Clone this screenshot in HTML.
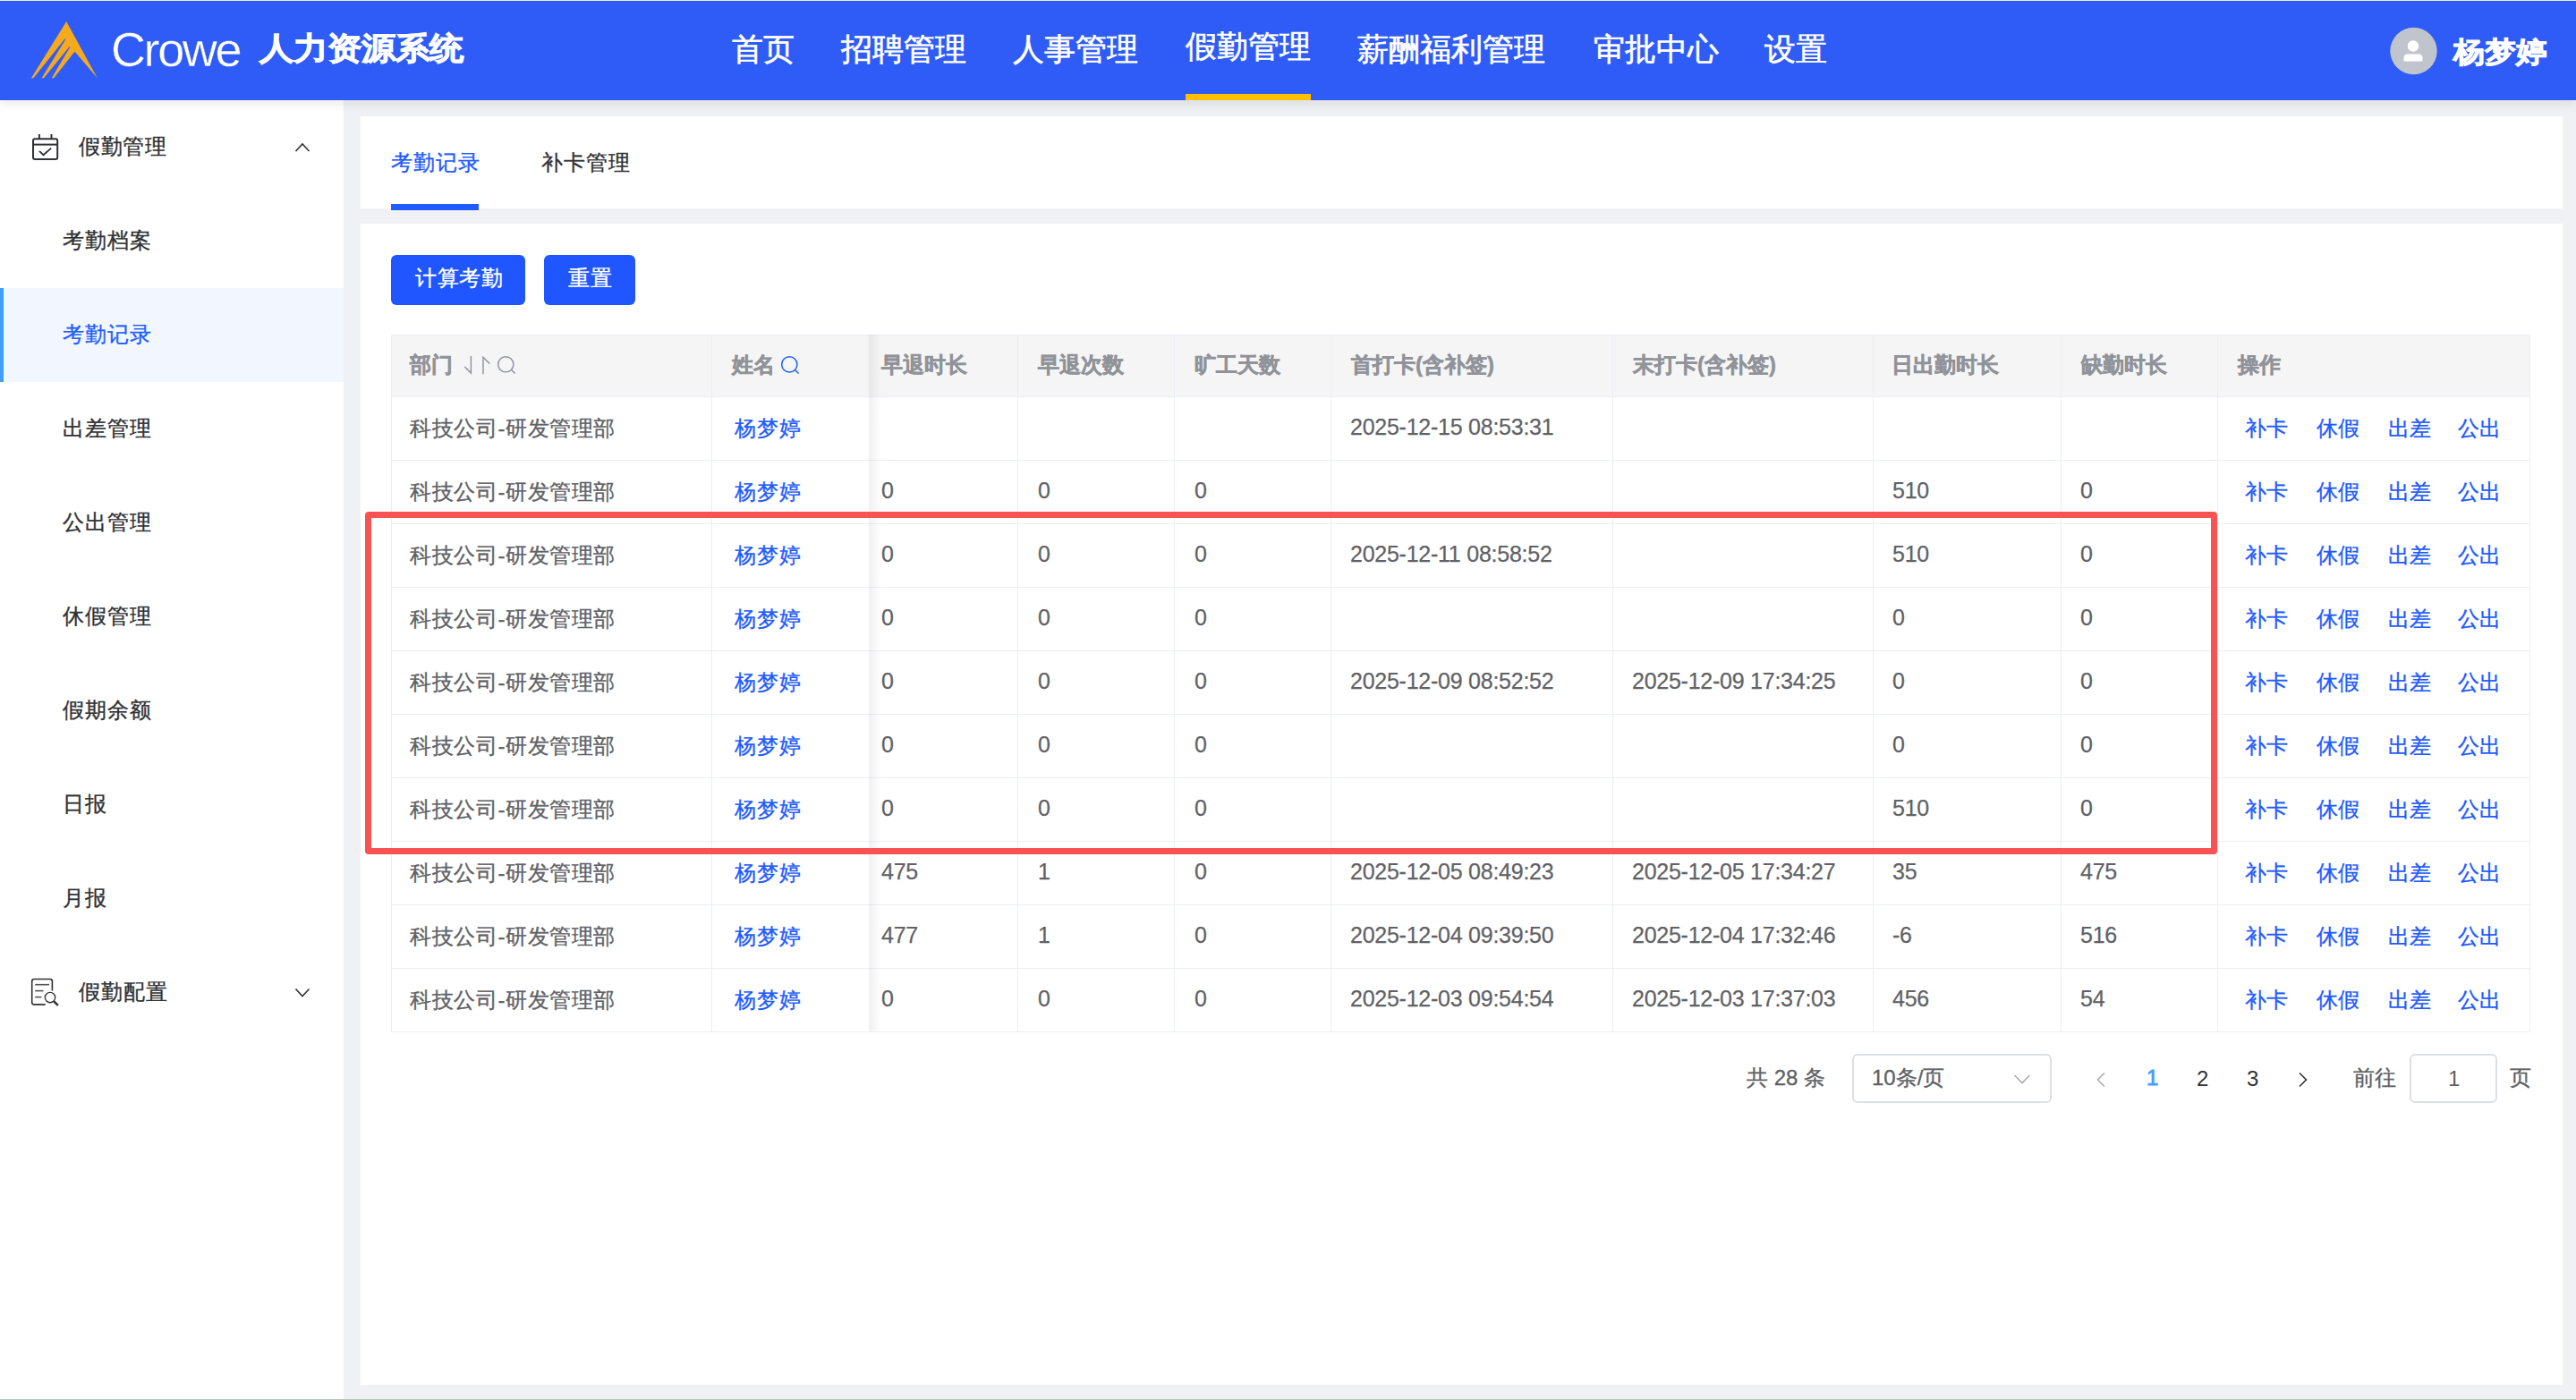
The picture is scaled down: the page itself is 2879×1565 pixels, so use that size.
<!DOCTYPE html><html><head><meta charset="utf-8"><style>
*{margin:0;padding:0;box-sizing:border-box}
html,body{width:2879px;height:1565px;overflow:hidden;background:#f0f1f4;font-family:"Liberation Sans",sans-serif;position:relative}
.a{position:absolute;white-space:nowrap;line-height:1}
#hdr{position:absolute;left:0;top:0;width:2879px;height:112px;background:#2f5cf6;border-top:1px solid #ebebdf;box-shadow:0 3px 12px rgba(0,0,0,.10);z-index:5}
.nav{color:#fff;font-size:35px;-webkit-text-stroke:.6px #fff}
#side{position:absolute;left:0;top:112px;width:384px;height:1453px;background:#fff}
.sm{font-size:24px;color:#303133;letter-spacing:1px;-webkit-text-stroke-width:.35px}
.cj{-webkit-text-stroke-width:.35px}
.card{position:absolute;background:#fff}
.th{font-size:24px;font-weight:bold;color:#909399;-webkit-text-stroke:.5px #909399}
.td{font-size:24px;color:#606266}
.num{font-size:25px;margin-top:-2px;letter-spacing:-.25px;-webkit-text-stroke-width:.25px}
.lk{font-size:24px;color:#1f5bff}
.hl{position:absolute;height:1px;background:#ebeef5}
.vl{position:absolute;width:1px;background:#ebeef5}
</style></head><body>
<div id="hdr">
<svg class="a" style="left:0;top:-1px" width="120" height="112" viewBox="0 0 120 112">
<path fill="#f5a91f" d="M74.2,24 L108.8,87.3 L84.3,58.6 Q83.6,57.8 82.8,58.6 L60.2,87.3 L57.8,87.3 L78.3,52.6 Q78.4,51.6 77.5,52.2 L49,87.3 L46.6,87.3 L73.3,44 Q73.4,43 72.5,43.6 L37.4,87.3 L35,87.3 Z"/></svg>
<div class="a" style="left:124px;top:27px;font-size:54px;color:#fff;letter-spacing:-2.4px;-webkit-text-stroke:.35px #2f5cf6">Crowe</div>
<div class="a" style="left:290px;top:36px;font-size:38px;font-weight:bold;color:#fff;-webkit-text-stroke:1px #fff;transform:scaleY(.91);transform-origin:0 0">人力资源系统</div>
<div class="a nav" style="left:818px;top:36px">首页</div>
<div class="a nav" style="left:940px;top:36px">招聘管理</div>
<div class="a nav" style="left:1132px;top:36px">人事管理</div>
<div class="a nav" style="left:1325px;top:33px">假勤管理</div>
<div class="a nav" style="left:1517px;top:36px">薪酬福利管理</div>
<div class="a nav" style="left:1781px;top:36px">审批中心</div>
<div class="a nav" style="left:1972px;top:36px">设置</div>
<div class="a" style="left:1325px;top:104px;width:140px;height:7px;background:#ffc000"></div>
<svg class="a" style="left:2670px;top:29px" width="54" height="54" viewBox="0 0 54 54">
<circle cx="27.5" cy="27" r="26.2" fill="#c0c5cd"/><circle cx="27" cy="21.5" r="6.2" fill="#fff"/>
<path fill="#fff" d="M16.5,38.5 L16.5,35 Q16.5,30.5 21,30.5 L33,30.5 Q37.5,30.5 37.5,35 L37.5,38.5 Z"/></svg>
<div class="a" style="left:2742px;top:40px;font-size:35px;font-weight:bold;color:#fff;-webkit-text-stroke:1px #fff;transform:scaleY(.92);transform-origin:0 0">杨梦婷</div>
</div>
<div id="side"></div>
<svg class="a" style="left:28px;top:140px" width="50" height="50" viewBox="28 140 50 50" fill="none" stroke="#303133" stroke-width="2">
<rect x="37" y="155.3" width="27.2" height="22.6" rx="2"/><line x1="37" y1="161.6" x2="64.2" y2="161.6"/>
<line x1="43.9" y1="150" x2="43.9" y2="155"/><line x1="57.5" y1="150" x2="57.5" y2="155"/>
<polyline points="44,168.8 48.5,173.2 57.2,165.6" stroke-width="1.8"/></svg>
<div class="a sm" style="left:88px;top:152px;letter-spacing:.5px">假勤管理</div>
<svg class="a" style="left:328px;top:156px" width="20" height="16" viewBox="0 0 20 16" fill="none" stroke="#303133" stroke-width="1.6"><polyline points="2.5,13 10,5 17.5,13"/></svg>
<div class="a sm" style="left:70px;top:257px">考勤档案</div>
<div class="a" style="left:0;top:322px;width:384px;height:105px;background:#f2f7ff"></div>
<div class="a" style="left:0;top:322px;width:4px;height:105px;background:#409eff"></div>
<div class="a sm" style="left:70px;top:362px;color:#1f5eff">考勤记录</div>
<div class="a sm" style="left:70px;top:467px">出差管理</div>
<div class="a sm" style="left:70px;top:572px">公出管理</div>
<div class="a sm" style="left:70px;top:677px">休假管理</div>
<div class="a sm" style="left:70px;top:782px">假期余额</div>
<div class="a sm" style="left:70px;top:887px">日报</div>
<div class="a sm" style="left:70px;top:992px">月报</div>
<svg class="a" style="left:28px;top:1085px" width="50" height="50" viewBox="28 1085 50 50" fill="none" stroke="#303133" stroke-width="1.6">
<path d="M58.4,1107.5 L58.4,1097 Q58.4,1094.5 55.9,1094.5 L38.2,1094.5 Q35.7,1094.5 35.7,1097 L35.7,1120.4 Q35.7,1122.9 38.2,1122.9 L50.7,1122.9"/>
<g stroke="#555"><line x1="39.2" y1="1100.7" x2="55" y2="1100.7"/><line x1="39.2" y1="1107.6" x2="48.5" y2="1107.6"/><line x1="39.2" y1="1114.6" x2="46.5" y2="1114.6"/></g>
<circle cx="56" cy="1115" r="5.7" stroke-width="1.35"/><line x1="60.3" y1="1119.3" x2="64.8" y2="1123.8" stroke-width="2.6"/></svg>
<div class="a sm" style="left:88px;top:1097px">假勤配置</div>
<svg class="a" style="left:328px;top:1102px" width="20" height="16" viewBox="0 0 20 16" fill="none" stroke="#303133" stroke-width="1.6"><polyline points="2.5,3.5 10,11.5 17.5,3.5"/></svg>
<div class="card" style="left:403px;top:130px;width:2461px;height:103px"></div>
<div class="a" style="left:437px;top:170px;font-size:24px;color:#1f5bff;letter-spacing:1px;-webkit-text-stroke-width:.35px">考勤记录</div>
<div class="a" style="left:605px;top:170px;font-size:24px;color:#303133;letter-spacing:1px;-webkit-text-stroke-width:.35px">补卡管理</div>
<div class="a" style="left:437px;top:228px;width:98px;height:7px;background:#1f5bff"></div>
<div class="card" style="left:403px;top:250px;width:2461px;height:1298px"></div>
<div class="a" style="left:437px;top:285px;width:150px;height:56px;background:#1f56ff;border-radius:6px"></div>
<div class="a" style="left:464px;top:299px;font-size:24px;color:#fff;letter-spacing:.7px;-webkit-text-stroke-width:.35px">计算考勤</div>
<div class="a" style="left:608px;top:285px;width:102px;height:56px;background:#1f56ff;border-radius:6px"></div>
<div class="a" style="left:635px;top:299px;font-size:24px;color:#fff;letter-spacing:1px;-webkit-text-stroke-width:.35px">重置</div>
<div class="a" style="left:437px;top:374px;width:2391px;height:69px;background:#f5f5f5"></div>
<div class="hl" style="left:437px;top:374px;width:2391px"></div>
<div class="hl" style="left:437px;top:443px;width:2391px"></div>
<div class="hl" style="left:437px;top:514px;width:2391px"></div>
<div class="hl" style="left:437px;top:585px;width:2391px"></div>
<div class="hl" style="left:437px;top:656px;width:2391px"></div>
<div class="hl" style="left:437px;top:727px;width:2391px"></div>
<div class="hl" style="left:437px;top:798px;width:2391px"></div>
<div class="hl" style="left:437px;top:869px;width:2391px"></div>
<div class="hl" style="left:437px;top:940px;width:2391px"></div>
<div class="hl" style="left:437px;top:1011px;width:2391px"></div>
<div class="hl" style="left:437px;top:1082px;width:2391px"></div>
<div class="hl" style="left:437px;top:1153px;width:2391px"></div>
<div class="vl" style="left:437px;top:374px;height:779px"></div>
<div class="vl" style="left:795px;top:374px;height:779px"></div>
<div class="vl" style="left:1137px;top:374px;height:779px"></div>
<div class="vl" style="left:1312px;top:374px;height:779px"></div>
<div class="vl" style="left:1487px;top:374px;height:779px"></div>
<div class="vl" style="left:1802px;top:374px;height:779px"></div>
<div class="vl" style="left:2093px;top:374px;height:779px"></div>
<div class="vl" style="left:2303px;top:374px;height:779px"></div>
<div class="vl" style="left:2478px;top:374px;height:779px"></div>
<div class="vl" style="left:2827px;top:374px;height:779px"></div>
<div class="a" style="left:971px;top:374px;width:14px;height:779px;background:linear-gradient(90deg,rgba(0,0,0,.06),rgba(0,0,0,0))"></div>
<div class="a th" style="left:458px;top:396px">部门</div>
<div class="a th" style="left:818px;top:396px">姓名</div>
<div class="a th" style="left:985px;top:396px">早退时长</div>
<div class="a th" style="left:1160px;top:396px">早退次数</div>
<div class="a th" style="left:1335px;top:396px">旷工天数</div>
<div class="a th" style="left:1510px;top:396px">首打卡(含补签)</div>
<div class="a th" style="left:1825px;top:396px">末打卡(含补签)</div>
<div class="a th" style="left:2114px;top:396px">日出勤时长</div>
<div class="a th" style="left:2326px;top:396px">缺勤时长</div>
<div class="a th" style="left:2501px;top:396px">操作</div>
<svg class="a" style="left:510px;top:385px" width="80" height="45" viewBox="510 385 80 45" fill="none" stroke="#8c9099" stroke-width="1.4">
<polyline points="526.4,398 526.4,417 519.3,409.9"/><polyline points="540,418.3 540,399.3 547.3,406.5"/>
<circle cx="565.3" cy="407.3" r="8.6"/><line x1="571.6" y1="413.6" x2="575.6" y2="417.6"/></svg>
<svg class="a" style="left:860px;top:385px" width="45" height="45" viewBox="860 385 45 45" fill="none" stroke="#1f5bff" stroke-width="1.5">
<circle cx="882.3" cy="407.4" r="8.6"/><line x1="888.6" y1="413.7" x2="892.5" y2="417.5"/></svg>
<div class="a td cj" style="left:458px;top:467px;letter-spacing:.6px">科技公司-研发管理部</div>
<div class="a lk cj" style="left:821px;top:467px;letter-spacing:1px">杨梦婷</div>
<div class="a td num" style="left:1509px;top:467px">2025-12-15 08:53:31</div>
<div class="a lk cj" style="left:2509px;top:467px">补卡</div>
<div class="a lk cj" style="left:2589px;top:467px">休假</div>
<div class="a lk cj" style="left:2669px;top:467px">出差</div>
<div class="a lk cj" style="left:2747px;top:467px">公出</div>
<div class="a td cj" style="left:458px;top:538px;letter-spacing:.6px">科技公司-研发管理部</div>
<div class="a lk cj" style="left:821px;top:538px;letter-spacing:1px">杨梦婷</div>
<div class="a td num" style="left:985px;top:538px">0</div>
<div class="a td num" style="left:1160px;top:538px">0</div>
<div class="a td num" style="left:1335px;top:538px">0</div>
<div class="a td num" style="left:2115px;top:538px">510</div>
<div class="a td num" style="left:2325px;top:538px">0</div>
<div class="a lk cj" style="left:2509px;top:538px">补卡</div>
<div class="a lk cj" style="left:2589px;top:538px">休假</div>
<div class="a lk cj" style="left:2669px;top:538px">出差</div>
<div class="a lk cj" style="left:2747px;top:538px">公出</div>
<div class="a td cj" style="left:458px;top:609px;letter-spacing:.6px">科技公司-研发管理部</div>
<div class="a lk cj" style="left:821px;top:609px;letter-spacing:1px">杨梦婷</div>
<div class="a td num" style="left:985px;top:609px">0</div>
<div class="a td num" style="left:1160px;top:609px">0</div>
<div class="a td num" style="left:1335px;top:609px">0</div>
<div class="a td num" style="left:1509px;top:609px">2025-12-11 08:58:52</div>
<div class="a td num" style="left:2115px;top:609px">510</div>
<div class="a td num" style="left:2325px;top:609px">0</div>
<div class="a lk cj" style="left:2509px;top:609px">补卡</div>
<div class="a lk cj" style="left:2589px;top:609px">休假</div>
<div class="a lk cj" style="left:2669px;top:609px">出差</div>
<div class="a lk cj" style="left:2747px;top:609px">公出</div>
<div class="a td cj" style="left:458px;top:680px;letter-spacing:.6px">科技公司-研发管理部</div>
<div class="a lk cj" style="left:821px;top:680px;letter-spacing:1px">杨梦婷</div>
<div class="a td num" style="left:985px;top:680px">0</div>
<div class="a td num" style="left:1160px;top:680px">0</div>
<div class="a td num" style="left:1335px;top:680px">0</div>
<div class="a td num" style="left:2115px;top:680px">0</div>
<div class="a td num" style="left:2325px;top:680px">0</div>
<div class="a lk cj" style="left:2509px;top:680px">补卡</div>
<div class="a lk cj" style="left:2589px;top:680px">休假</div>
<div class="a lk cj" style="left:2669px;top:680px">出差</div>
<div class="a lk cj" style="left:2747px;top:680px">公出</div>
<div class="a td cj" style="left:458px;top:751px;letter-spacing:.6px">科技公司-研发管理部</div>
<div class="a lk cj" style="left:821px;top:751px;letter-spacing:1px">杨梦婷</div>
<div class="a td num" style="left:985px;top:751px">0</div>
<div class="a td num" style="left:1160px;top:751px">0</div>
<div class="a td num" style="left:1335px;top:751px">0</div>
<div class="a td num" style="left:1509px;top:751px">2025-12-09 08:52:52</div>
<div class="a td num" style="left:1824px;top:751px">2025-12-09 17:34:25</div>
<div class="a td num" style="left:2115px;top:751px">0</div>
<div class="a td num" style="left:2325px;top:751px">0</div>
<div class="a lk cj" style="left:2509px;top:751px">补卡</div>
<div class="a lk cj" style="left:2589px;top:751px">休假</div>
<div class="a lk cj" style="left:2669px;top:751px">出差</div>
<div class="a lk cj" style="left:2747px;top:751px">公出</div>
<div class="a td cj" style="left:458px;top:822px;letter-spacing:.6px">科技公司-研发管理部</div>
<div class="a lk cj" style="left:821px;top:822px;letter-spacing:1px">杨梦婷</div>
<div class="a td num" style="left:985px;top:822px">0</div>
<div class="a td num" style="left:1160px;top:822px">0</div>
<div class="a td num" style="left:1335px;top:822px">0</div>
<div class="a td num" style="left:2115px;top:822px">0</div>
<div class="a td num" style="left:2325px;top:822px">0</div>
<div class="a lk cj" style="left:2509px;top:822px">补卡</div>
<div class="a lk cj" style="left:2589px;top:822px">休假</div>
<div class="a lk cj" style="left:2669px;top:822px">出差</div>
<div class="a lk cj" style="left:2747px;top:822px">公出</div>
<div class="a td cj" style="left:458px;top:893px;letter-spacing:.6px">科技公司-研发管理部</div>
<div class="a lk cj" style="left:821px;top:893px;letter-spacing:1px">杨梦婷</div>
<div class="a td num" style="left:985px;top:893px">0</div>
<div class="a td num" style="left:1160px;top:893px">0</div>
<div class="a td num" style="left:1335px;top:893px">0</div>
<div class="a td num" style="left:2115px;top:893px">510</div>
<div class="a td num" style="left:2325px;top:893px">0</div>
<div class="a lk cj" style="left:2509px;top:893px">补卡</div>
<div class="a lk cj" style="left:2589px;top:893px">休假</div>
<div class="a lk cj" style="left:2669px;top:893px">出差</div>
<div class="a lk cj" style="left:2747px;top:893px">公出</div>
<div class="a td cj" style="left:458px;top:964px;letter-spacing:.6px">科技公司-研发管理部</div>
<div class="a lk cj" style="left:821px;top:964px;letter-spacing:1px">杨梦婷</div>
<div class="a td num" style="left:985px;top:964px">475</div>
<div class="a td num" style="left:1160px;top:964px">1</div>
<div class="a td num" style="left:1335px;top:964px">0</div>
<div class="a td num" style="left:1509px;top:964px">2025-12-05 08:49:23</div>
<div class="a td num" style="left:1824px;top:964px">2025-12-05 17:34:27</div>
<div class="a td num" style="left:2115px;top:964px">35</div>
<div class="a td num" style="left:2325px;top:964px">475</div>
<div class="a lk cj" style="left:2509px;top:964px">补卡</div>
<div class="a lk cj" style="left:2589px;top:964px">休假</div>
<div class="a lk cj" style="left:2669px;top:964px">出差</div>
<div class="a lk cj" style="left:2747px;top:964px">公出</div>
<div class="a td cj" style="left:458px;top:1035px;letter-spacing:.6px">科技公司-研发管理部</div>
<div class="a lk cj" style="left:821px;top:1035px;letter-spacing:1px">杨梦婷</div>
<div class="a td num" style="left:985px;top:1035px">477</div>
<div class="a td num" style="left:1160px;top:1035px">1</div>
<div class="a td num" style="left:1335px;top:1035px">0</div>
<div class="a td num" style="left:1509px;top:1035px">2025-12-04 09:39:50</div>
<div class="a td num" style="left:1824px;top:1035px">2025-12-04 17:32:46</div>
<div class="a td num" style="left:2115px;top:1035px">-6</div>
<div class="a td num" style="left:2325px;top:1035px">516</div>
<div class="a lk cj" style="left:2509px;top:1035px">补卡</div>
<div class="a lk cj" style="left:2589px;top:1035px">休假</div>
<div class="a lk cj" style="left:2669px;top:1035px">出差</div>
<div class="a lk cj" style="left:2747px;top:1035px">公出</div>
<div class="a td cj" style="left:458px;top:1106px;letter-spacing:.6px">科技公司-研发管理部</div>
<div class="a lk cj" style="left:821px;top:1106px;letter-spacing:1px">杨梦婷</div>
<div class="a td num" style="left:985px;top:1106px">0</div>
<div class="a td num" style="left:1160px;top:1106px">0</div>
<div class="a td num" style="left:1335px;top:1106px">0</div>
<div class="a td num" style="left:1509px;top:1106px">2025-12-03 09:54:54</div>
<div class="a td num" style="left:1824px;top:1106px">2025-12-03 17:37:03</div>
<div class="a td num" style="left:2115px;top:1106px">456</div>
<div class="a td num" style="left:2325px;top:1106px">54</div>
<div class="a lk cj" style="left:2509px;top:1106px">补卡</div>
<div class="a lk cj" style="left:2589px;top:1106px">休假</div>
<div class="a lk cj" style="left:2669px;top:1106px">出差</div>
<div class="a lk cj" style="left:2747px;top:1106px">公出</div>
<div class="a" style="left:408px;top:572px;width:2070px;height:383px;border:7px solid #f85252;border-radius:4px;z-index:3"></div>
<div class="a td cj" style="left:1952px;top:1193px">共 28 条</div>
<div class="a" style="left:2070px;top:1178px;width:223px;height:55px;border:2px solid #dcdfe6;border-radius:6px"></div>
<div class="a td cj" style="left:2092px;top:1193px">10条/页</div>
<svg class="a" style="left:2248px;top:1198px" width="24" height="16" viewBox="0 0 24 16" fill="none" stroke="#a8abb2" stroke-width="1.6"><polyline points="3.5,4 12,12.5 20.5,4"/></svg>
<svg class="a" style="left:2340px;top:1196px" width="16" height="22" viewBox="0 0 16 22" fill="none" stroke="#a8abb2" stroke-width="1.6"><polyline points="12,3.5 4.5,11 12,18.5"/></svg>
<div class="a" style="left:2399px;top:1193px;font-size:24px;color:#409eff;-webkit-text-stroke:.8px #409eff">1</div>
<div class="a" style="left:2455px;top:1194px;font-size:24px;color:#303133">2</div>
<div class="a" style="left:2511px;top:1194px;font-size:24px;color:#303133">3</div>
<svg class="a" style="left:2566px;top:1196px" width="16" height="22" viewBox="0 0 16 22" fill="none" stroke="#303133" stroke-width="1.6"><polyline points="4,3.5 11.5,11 4,18.5"/></svg>
<div class="a td cj" style="left:2630px;top:1193px">前往</div>
<div class="a" style="left:2693px;top:1178px;width:98px;height:55px;border:2px solid #dcdfe6;border-radius:6px"></div>
<div class="a td" style="left:2736px;top:1194px">1</div>
<div class="a td cj" style="left:2805px;top:1193px">页</div>
<div class="a" style="left:0;top:1564px;width:2879px;height:1px;background:#b3c6ba"></div>
</body></html>
